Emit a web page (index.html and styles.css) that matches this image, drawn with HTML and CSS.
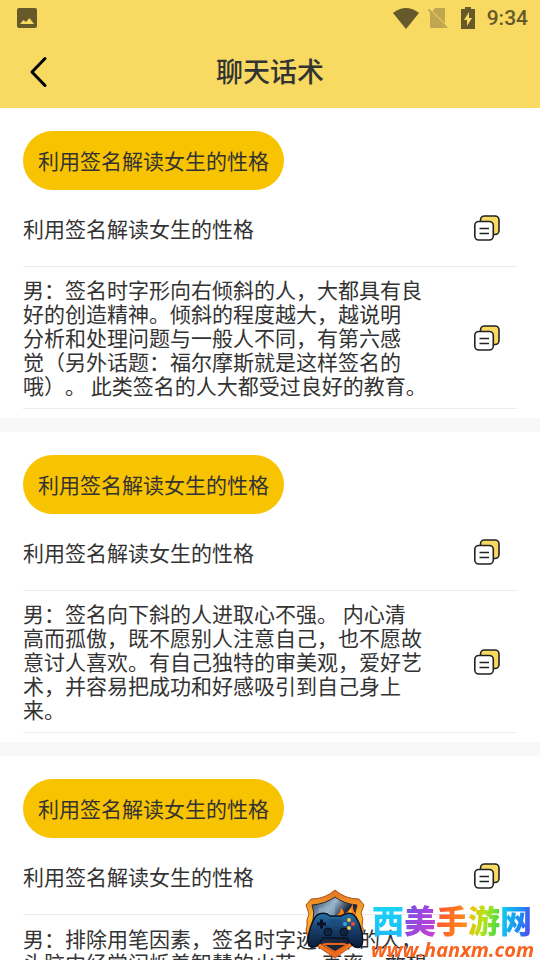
FILE: index.html
```
<!DOCTYPE html>
<html lang="zh-CN">
<head>
<meta charset="utf-8">
<meta name="viewport" content="width=device-width, initial-scale=1">
<title>聊天话术</title>
<link rel="stylesheet" href="styles.css">
</head>
<body>
<svg class="defs" aria-hidden="true">
  <symbol id="copy" viewBox="0 0 28 28">
    <rect x="7.500" y="2" width="18.500" height="18.500" rx="4" fill="#f8da62" stroke="#222" stroke-width="1.600"/>
    <rect x="1.800" y="7.500" width="18.500" height="18.500" rx="4" fill="#fff" stroke="#222" stroke-width="1.600"/>
    <path d="M6.500 14.500h9.500M6.500 19.500h9.500" stroke="#222" stroke-width="1.600"/>
  </symbol>
</svg>
<header class="top">
  <div class="status">
    <svg class="status-icon" viewBox="0 0 20 20"><path fill="#665a2b" fill-rule="evenodd" d="M2 0h16a2 2 0 0 1 2 2v16a2 2 0 0 1-2 2H2a2 2 0 0 1-2-2V2a2 2 0 0 1 2-2zM3 16h14l-4.500-6-3.500 4-2.500-2z"/></svg>
    <div class="status-right">
      <svg class="wifi" viewBox="0 0 26 21"><path fill="#665a2b" d="M0 5Q13-5 26 5L13 21z"/></svg>
      <svg class="sim" viewBox="0 0 20 20"><path fill="#c0a651" d="M7 0h9a1 1 0 0 1 1 1v14.500L4.500 3zM2 4L17 19q-.5 1-1.500 1H3a1 1 0 0 1-1-1z"/><path d="M.5 1.500l18.500 18.500" stroke="#c0a651" stroke-width="2.200"/></svg>
      <svg class="battery" viewBox="0 0 14 22"><path fill="#665a2b" fill-rule="evenodd" d="M4 0h6v2h4v20H0V2h4zM8 5l-5 8h3v6l5-8H8z"/></svg>
      <span class="time">9:34</span>
    </div>
  </div>
  <div class="bar">
    <button class="back" aria-label="返回"><svg viewBox="0 0 20 32"><path d="M16 2.500L3 16l13 13.500" fill="none" stroke="#000" stroke-width="3" stroke-linecap="round" stroke-linejoin="round"/></svg></button>
    <h1>聊天话术</h1>
  </div>
</header>
<main>
  <section class="card">
    <h2 class="pill">利用签名解读女生的性格</h2>
    <div class="row row-title"><p>利用签名解读女生的性格</p><button class="copy" aria-label="复制"><svg><use href="#copy"/></svg></button></div>
    <div class="row row-text"><p>男：签名时字形向右倾斜的人，大都具有良<br>好的创造精神。倾斜的程度越大，越说明<br>分析和处理问题与一般人不同，有第六感<br>觉（另外话题：福尔摩斯就是这样签名的<br>哦）。 此类签名的人大都受过良好的教育。</p><button class="copy" aria-label="复制"><svg><use href="#copy"/></svg></button></div>
  </section>
  <section class="card">
    <h2 class="pill">利用签名解读女生的性格</h2>
    <div class="row row-title"><p>利用签名解读女生的性格</p><button class="copy" aria-label="复制"><svg><use href="#copy"/></svg></button></div>
    <div class="row row-text"><p>男：签名向下斜的人进取心不强。 内心清<br>高而孤傲，既不愿别人注意自己，也不愿故<br>意讨人喜欢。有自己独特的审美观，爱好艺<br>术，并容易把成功和好感吸引到自己身上<br>来。</p><button class="copy" aria-label="复制"><svg><use href="#copy"/></svg></button></div>
  </section>
  <section class="card">
    <h2 class="pill">利用签名解读女生的性格</h2>
    <div class="row row-title"><p>利用签名解读女生的性格</p><button class="copy" aria-label="复制"><svg><use href="#copy"/></svg></button></div>
    <div class="row row-text row-start"><p>男：排除用笔因素，签名时字迹潦草的人，<br>头脑中经常闪烁着智慧的火花。 直率，敢想</p></div>
  </section>
</main>
<aside class="mark">
  <svg class="shield" viewBox="0 0 66 72">
    <defs>
      <linearGradient id="fire" x2="0" y2="1"><stop offset="0" stop-color="#e0701f"/><stop offset=".4" stop-color="#ffb52b"/><stop offset="1" stop-color="#f0641c"/></linearGradient>
      <linearGradient id="steel" x2="1" y2="1"><stop offset="0" stop-color="#253c59"/><stop offset=".3" stop-color="#9db8cf"/><stop offset=".5" stop-color="#1c2c42"/><stop offset="1" stop-color="#0c1830"/></linearGradient>
      <linearGradient id="pad" x2="0" y2="1"><stop offset="0" stop-color="#2872a8"/><stop offset=".5" stop-color="#173c68"/><stop offset="1" stop-color="#0b1b36"/></linearGradient>
    </defs>
    <path d="M34 2Q44 11 58 11l5 6-3 8q3 6 1 13 3 3 0 8-3 8-9 11L34 70 16 58Q8 54 6 46q-2-4 0-8-1-6 2-12l-3-9 5-6Q24 11 34 2z" fill="url(#fire)" stroke="#b5501a"/>
    <path d="M34 9Q43 16 56 17q-3 7-1 15-1 19-8 24l-13 9-14-9Q12 50 12 32q2-8-1-15 13-1 23-8z" fill="url(#steel)" stroke="#25283a"/>
    <path d="M17 20q10-1 17-6v17H17q2-5 0-11z" fill="#8fb0c8" opacity=".6"/>
    <path d="M31 29q8-1 9-9 3 2 3 6 6-3 9-11-1 7 3 11l1 10H32z" fill="#ff7a16"/>
    <path d="M39 30q4-2 5-5 1 2 2 1 3-3 4-6 0 6 4 12l-4 3z" fill="#ffc43a"/>
    <path d="M20 56q8-2 12-1h6q5-1 10 2l-14 9z" fill="#e8641b"/>
    <path d="M24 57h20l-10 6z" fill="#18263c"/>
    <path d="M16 27q5-3 10-1l3 2h11l4-2q6-2 9 1 5 5 8 18 2 12-2 14-6 3-13-9H22Q16 61 10 59q-5-2-2-14 3-13 8-18z" fill="url(#pad)" stroke="#071326" stroke-width="1.500"/>
    <path d="M28 31h13l-2 7h-9z" fill="#1b4b7b" opacity=".7"/>
    <path d="M16 36h9M20.500 31.500v9" stroke="#071326" stroke-width="3"/>
    <circle cx="27" cy="44" r="4" fill="#102541" stroke="#06101f"/><circle cx="43" cy="44" r="4" fill="#102541" stroke="#06101f"/>
    <circle cx="48" cy="32" r="2" fill="#f7c544"/><circle cx="44" cy="36" r="2" fill="#36a7d8"/><circle cx="52" cy="36" r="2" fill="#ef4b38"/><circle cx="48" cy="40" r="2" fill="#f7c544"/>
  </svg>
  <div class="mark-text"><strong><span class="c1">西</span><span class="c2">美</span><span class="c3">手</span><span class="c4">游</span><span class="c5">网</span></strong><em>www.hanxm.com</em></div>
</aside>
</body>
</html>
```
FILE: styles.css
```
* { box-sizing: border-box; margin: 0; padding: 0; }
html, body { height: 100%; overflow: hidden; }
body { background: #fff; color: #333; font-family: "Noto Sans CJK SC", sans-serif; font-size: 21px; line-height: 24px; text-spacing-trim: space-all; }
svg { display: block; }
button { border: 0; background: none; }
.defs { position: absolute; width: 0; height: 0; }
.top { background: #f8da62; }
.status { display: flex; justify-content: space-between; align-items: center; height: 36px; padding: 0 12px 0 17px; }
.status-icon { width: 20px; height: 20px; }
.status-right { display: flex; align-items: center; }
.wifi { width: 26px; height: 21px; margin-right: 9px; }
.sim { width: 20px; height: 20px; margin-right: 13px; }
.battery { width: 14px; height: 22px; margin-right: 12px; }
.time { color: #665a2b; font-family: Roboto, sans-serif; font-size: 21px; font-weight: 500; }
.bar { display: grid; grid-template-columns: 48px 1fr 48px; align-items: center; height: 72px; padding: 0 15px; }
.back { display: flex; justify-content: center; align-items: center; height: 48px; }
.back svg { width: 20px; height: 32px; }
h1 { padding-bottom: 2px; text-align: center; font-size: 27px; line-height: 36px; font-weight: 500; }
.card { padding: 23px 23px 9px; border-bottom: 14px solid #f8f8f8; }
.pill { width: fit-content; padding: 17px 15px 18px; border-radius: 30px; background: #f8c300; font-size: 21px; line-height: 24px; font-weight: 400; }
.row { display: flex; justify-content: space-between; align-items: center; padding-right: 16px; border-bottom: 1px solid #ebebeb; }
.row p { padding-bottom: 1px; white-space: nowrap; }
.row-title { height: 77px; }
.row-text { min-height: 142px; }
.row-start { align-items: flex-start; padding-top: 11px; }
.copy { flex: none; width: 28px; height: 28px; }
.copy svg { width: 28px; height: 28px; }
.mark { position: fixed; right: 0; bottom: 0; display: flex; align-items: flex-end; }
.shield { width: 66px; height: 72px; }
.mark-text { display: flex; flex-direction: column; align-items: flex-end; padding: 0 6px 0 4px; }
.mark strong { padding: 0 2px 3px 0; font-size: 32px; line-height: 36px; font-weight: 900; white-space: nowrap; }
.mark strong span { color: transparent; background-clip: text; -webkit-background-clip: text; }
.c1 { background-image: linear-gradient(#18dcf5, #20b8f8); }
.c2 { background-image: linear-gradient(120deg, #6852e8, #d33cd0); }
.c3 { background-image: linear-gradient(100deg, #ff4c38, #ff9710); }
.c4 { background-image: linear-gradient(100deg, #ffb400, #b3e51b 50%, #28d850); }
.c5 { background-image: linear-gradient(100deg, #14dce9, #1a8df5 60%, #6a33e8); }
.mark em { color: #f96320; font-family: "Open Sans", sans-serif; font-size: 20px; line-height: 20px; font-weight: 700; }
```
